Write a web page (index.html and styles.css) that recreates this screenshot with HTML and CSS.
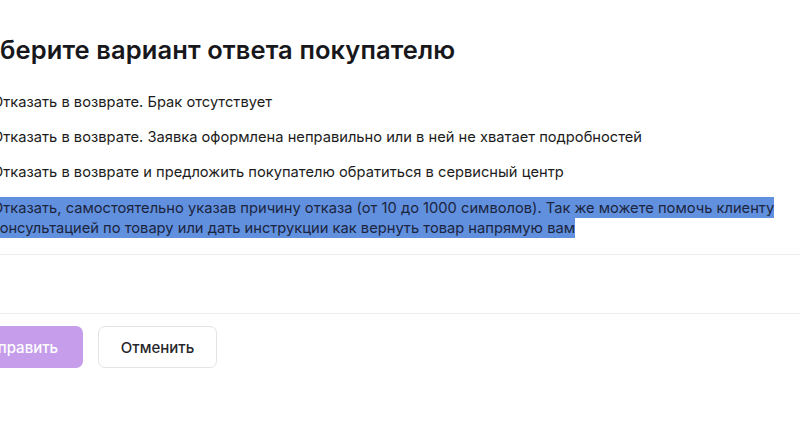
FILE: index.html
```html
<!DOCTYPE html>
<html lang="ru">
<head>
<meta charset="utf-8">
<link rel="stylesheet" href="styles.css">
</head>
<body>
<div class="page">
  <h2 class="title">Выберите вариант ответа покупателю</h2>
  <ul class="options">
    <li class="option"><span class="radio"></span><span class="label">Отказать в возврате. Брак отсутствует</span></li>
    <li class="option"><span class="radio"></span><span class="label">Отказать в возврате. Заявка оформлена неправильно или в ней не хватает подробностей</span></li>
    <li class="option"><span class="radio"></span><span class="label">Отказать в возврате и предложить покупателю обратиться в сервисный центр</span></li>
    <li class="option"><span class="radio"></span><span class="label"><span class="sel">Отказать, самостоятельно указав причину отказа (от 10 до 1000 символов). Так же можете помочь клиенту консультацией по товару или дать инструкции как вернуть товар напрямую вам</span></span></li>
  </ul>
  <div class="gap"></div>
  <div class="footer">
    <button class="btn btn-primary">Отправить</button>
    <button class="btn btn-secondary">Отменить</button>
  </div>
</div>
</body>
</html>
```

FILE: styles.css
```css
html, body {
  margin: 0;
  padding: 0;
  background: #ffffff;
  overflow: hidden;
}
body {
  font-family: Inter, "Noto Sans", sans-serif;
  color: #1f1f24;
  width: 800px;
  height: 445px;
}
.page {
  margin-left: -30px;
  padding-top: 34px;
}
.title {
  margin: 0 0 19px -7px;
  font-size: 25.5px;
  line-height: 32px;
  font-weight: 600;
  letter-spacing: 0.1px;
  color: #18181c;
}
.options {
  list-style: none;
  margin: 0;
  padding: 0;
  width: 860px;
  border-bottom: 1px solid #ececef;
}
.option {
  display: flex;
  align-items: flex-start;
  gap: 6px;
  padding: 7px 0 8px;
  font-size: 14.7px;
  line-height: 20px;
  color: #1c1c20;
}
.option:last-child {
  padding-bottom: 17px;
}
.radio {
  flex: none;
  width: 16px;
  height: 16px;
  margin-top: 2px;
  border-radius: 50%;
  border: 1px solid #c8c8cf;
  box-sizing: border-box;
}
.label {
  flex: 1;
  padding-right: 20px;
}
.sel {
  background: #6190de;
  color: #1b2540;
  padding: 1.5px 0;
  -webkit-box-decoration-break: clone;
  box-decoration-break: clone;
}
.gap {
  height: 58px;
  width: 860px;
  border-bottom: 1px solid #ececef;
}
.footer {
  display: flex;
  gap: 15px;
  padding-top: 12px;
}
.btn {
  height: 42px;
  border-radius: 7px;
  font-family: Inter, "Noto Sans", sans-serif;
  font-size: 15px;
  font-weight: 500;
  padding: 0;
  cursor: pointer;
}
.btn-primary {
  background: #c59deb;
  color: #ffffff;
  border: none;
  width: 129px;
  margin-left: -16px;
}
.btn-secondary {
  background: #ffffff;
  color: #26262b;
  border: 1px solid #e3e3e8;
  width: 119px;
}
```
